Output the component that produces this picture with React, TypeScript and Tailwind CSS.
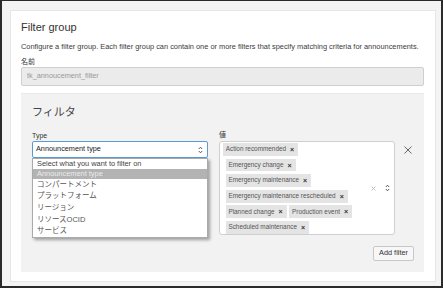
import React from "react";

const tags: string[][] = [
  ["Action recommended"],
  ["Emergency change"],
  ["Emergency maintenance"],
  ["Emergency maintenance rescheduled"],
  ["Planned change", "Production event"],
  ["Scheduled maintenance"],
];

function UpDown({ className }: { className?: string }) {
  return (
    <svg width="5" height="8" viewBox="0 0 5 8" className={className}>
      <path d="M0.8 3 L2.5 1.2 L4.2 3 M0.8 5 L2.5 6.8 L4.2 5" fill="none" stroke="#444" strokeWidth="0.9" />
    </svg>
  );
}

function Tag({ label, first }: { label: string; first?: boolean }) {
  return (
    <div
      className={
        "h-[12.7px] flex items-center bg-[#e4e4e4] pl-[2.7px] pr-[4px] text-[6.4px] text-[#555] " +
        (first ? "-ml-[2.7px]" : "")
      }
    >
      <span className="leading-none whitespace-nowrap">{label}</span>
      <span className="ml-[4px] text-[7px] font-bold text-[#333] leading-none">×</span>
    </div>
  );
}

export default function App() {
  return (
    <div className="w-[443px] h-[288px] bg-[#2b2b2b] pt-px pl-[2px] pr-[2px] pb-[2px] flex font-['Liberation_Sans','Noto_Sans_CJK_JP',sans-serif]">
      <div className="flex-1 bg-[#f4f4f4] pl-[8px] pt-[9px] pr-[5px] pb-[4px] flex">
        <div className="flex-1 bg-white border border-[#e6e6e6] pl-[10px] pr-[11px] pt-[10px] pb-[9.3px] flex flex-col">
          <div className="text-[11px] leading-[13px] text-[#333]">Filter group</div>
          <div className="mt-[7.5px] text-[7.4px] leading-[9px] text-[#3a3a3a] whitespace-nowrap">
            Configure a filter group. Each filter group can contain one or more filters that specify matching criteria for announcements.
          </div>
          <div className="mt-[6px] text-[7px] leading-[9px] text-[#333] font-['Noto_Sans_CJK_JP',sans-serif]">名前</div>
          <div className="mt-[1.5px] h-[19px] bg-[#ebebeb] border border-[#cfcfcf] rounded-[2px] pl-[5px] flex items-center text-[7.3px] text-[#999]">
            tk_annoucement_filter
          </div>
          <div className="mt-[6.7px] flex-1 bg-[#f2f2f2] border-t border-[#e9e9e9] pl-[11px] pr-[10.3px] pt-[10px] flex flex-col">
            <div className="text-[11px] leading-[14px] text-[#444] font-['Noto_Sans_CJK_JP',sans-serif]">フィルタ</div>
            <div className="mt-[13.3px] flex">
              <div className="w-[176px] flex flex-col">
                <div className="text-[7px] leading-[9px] text-[#333]">Type</div>
                <div className="relative mt-[1.2px]">
                  <div className="h-[17px] bg-white border border-[#5b9bd5] rounded-[2px] pl-[3px] pr-[4px] flex items-center justify-between text-[7.3px] text-[#222]">
                    <span>Announcement type</span>
                    <UpDown />
                  </div>
                  <div className="absolute left-0 top-full w-full bg-white border border-[#aaa] shadow-[2px_2px_3px_rgba(0,0,0,0.35)] text-[7.4px] text-[#444] z-10">
                    <div className="h-[9.5px] flex items-center pl-[4px] leading-none">Select what you want to filter on</div>
                    <div className="h-[10px] flex items-center pl-[4px] leading-none bg-[#b3b3b3] text-[#ececec]">Announcement type</div>
                    {["コンパートメント", "プラットフォーム", "リージョン", "リソースOCID", "サービス"].map((t) => (
                      <div key={t} className="h-[11.6px] flex items-center pl-[4px] leading-none text-[7.5px] text-[#555]">
                        {t}
                      </div>
                    ))}
                  </div>
                </div>
              </div>
              <div className="ml-[11px] w-[176px] flex flex-col">
                <div className="text-[7px] leading-[9px] text-[#333] font-['Noto_Sans_CJK_JP',sans-serif] -mt-[1px] mb-[1px]">値</div>
                <div className="mt-[1.2px] h-[94px] bg-white border border-[#cfcfcf] rounded-[3px] flex">
                  <div className="w-[150px] pt-[1px] pl-[5.7px] flex flex-wrap content-start gap-x-[2.7px] gap-y-[2.9px]">
                    {tags.map((row, i) =>
                      row.map((t, j) => <Tag key={t} label={t} first={i === 0 && j === 0} />)
                    )}
                  </div>
                  <div className="flex-1 flex items-center justify-end pr-[4px] gap-[9px]">
                    <svg width="5" height="5" viewBox="0 0 5 5">
                      <path d="M0.5 0.5 L4.5 4.5 M4.5 0.5 L0.5 4.5" stroke="#bbb" strokeWidth="0.9" />
                    </svg>
                    <UpDown />
                  </div>
                </div>
              </div>
              <div className="ml-[9px] pt-[14.8px]">
                <svg width="8" height="8" viewBox="0 0 8 8">
                  <path d="M0.5 0.5 L7.5 7.5 M7.5 0.5 L0.5 7.5" stroke="#555" strokeWidth="0.9" />
                </svg>
              </div>
            </div>
            <div className="mt-[11px] flex justify-end">
              <div className="w-[40.4px] h-[15.3px] bg-[#f7f7f7] border border-[#c8c8c8] rounded-[2px] flex items-center justify-center text-[7.3px] text-[#333]">
                Add filter
              </div>
            </div>
          </div>
        </div>
      </div>
    </div>
  );
}
